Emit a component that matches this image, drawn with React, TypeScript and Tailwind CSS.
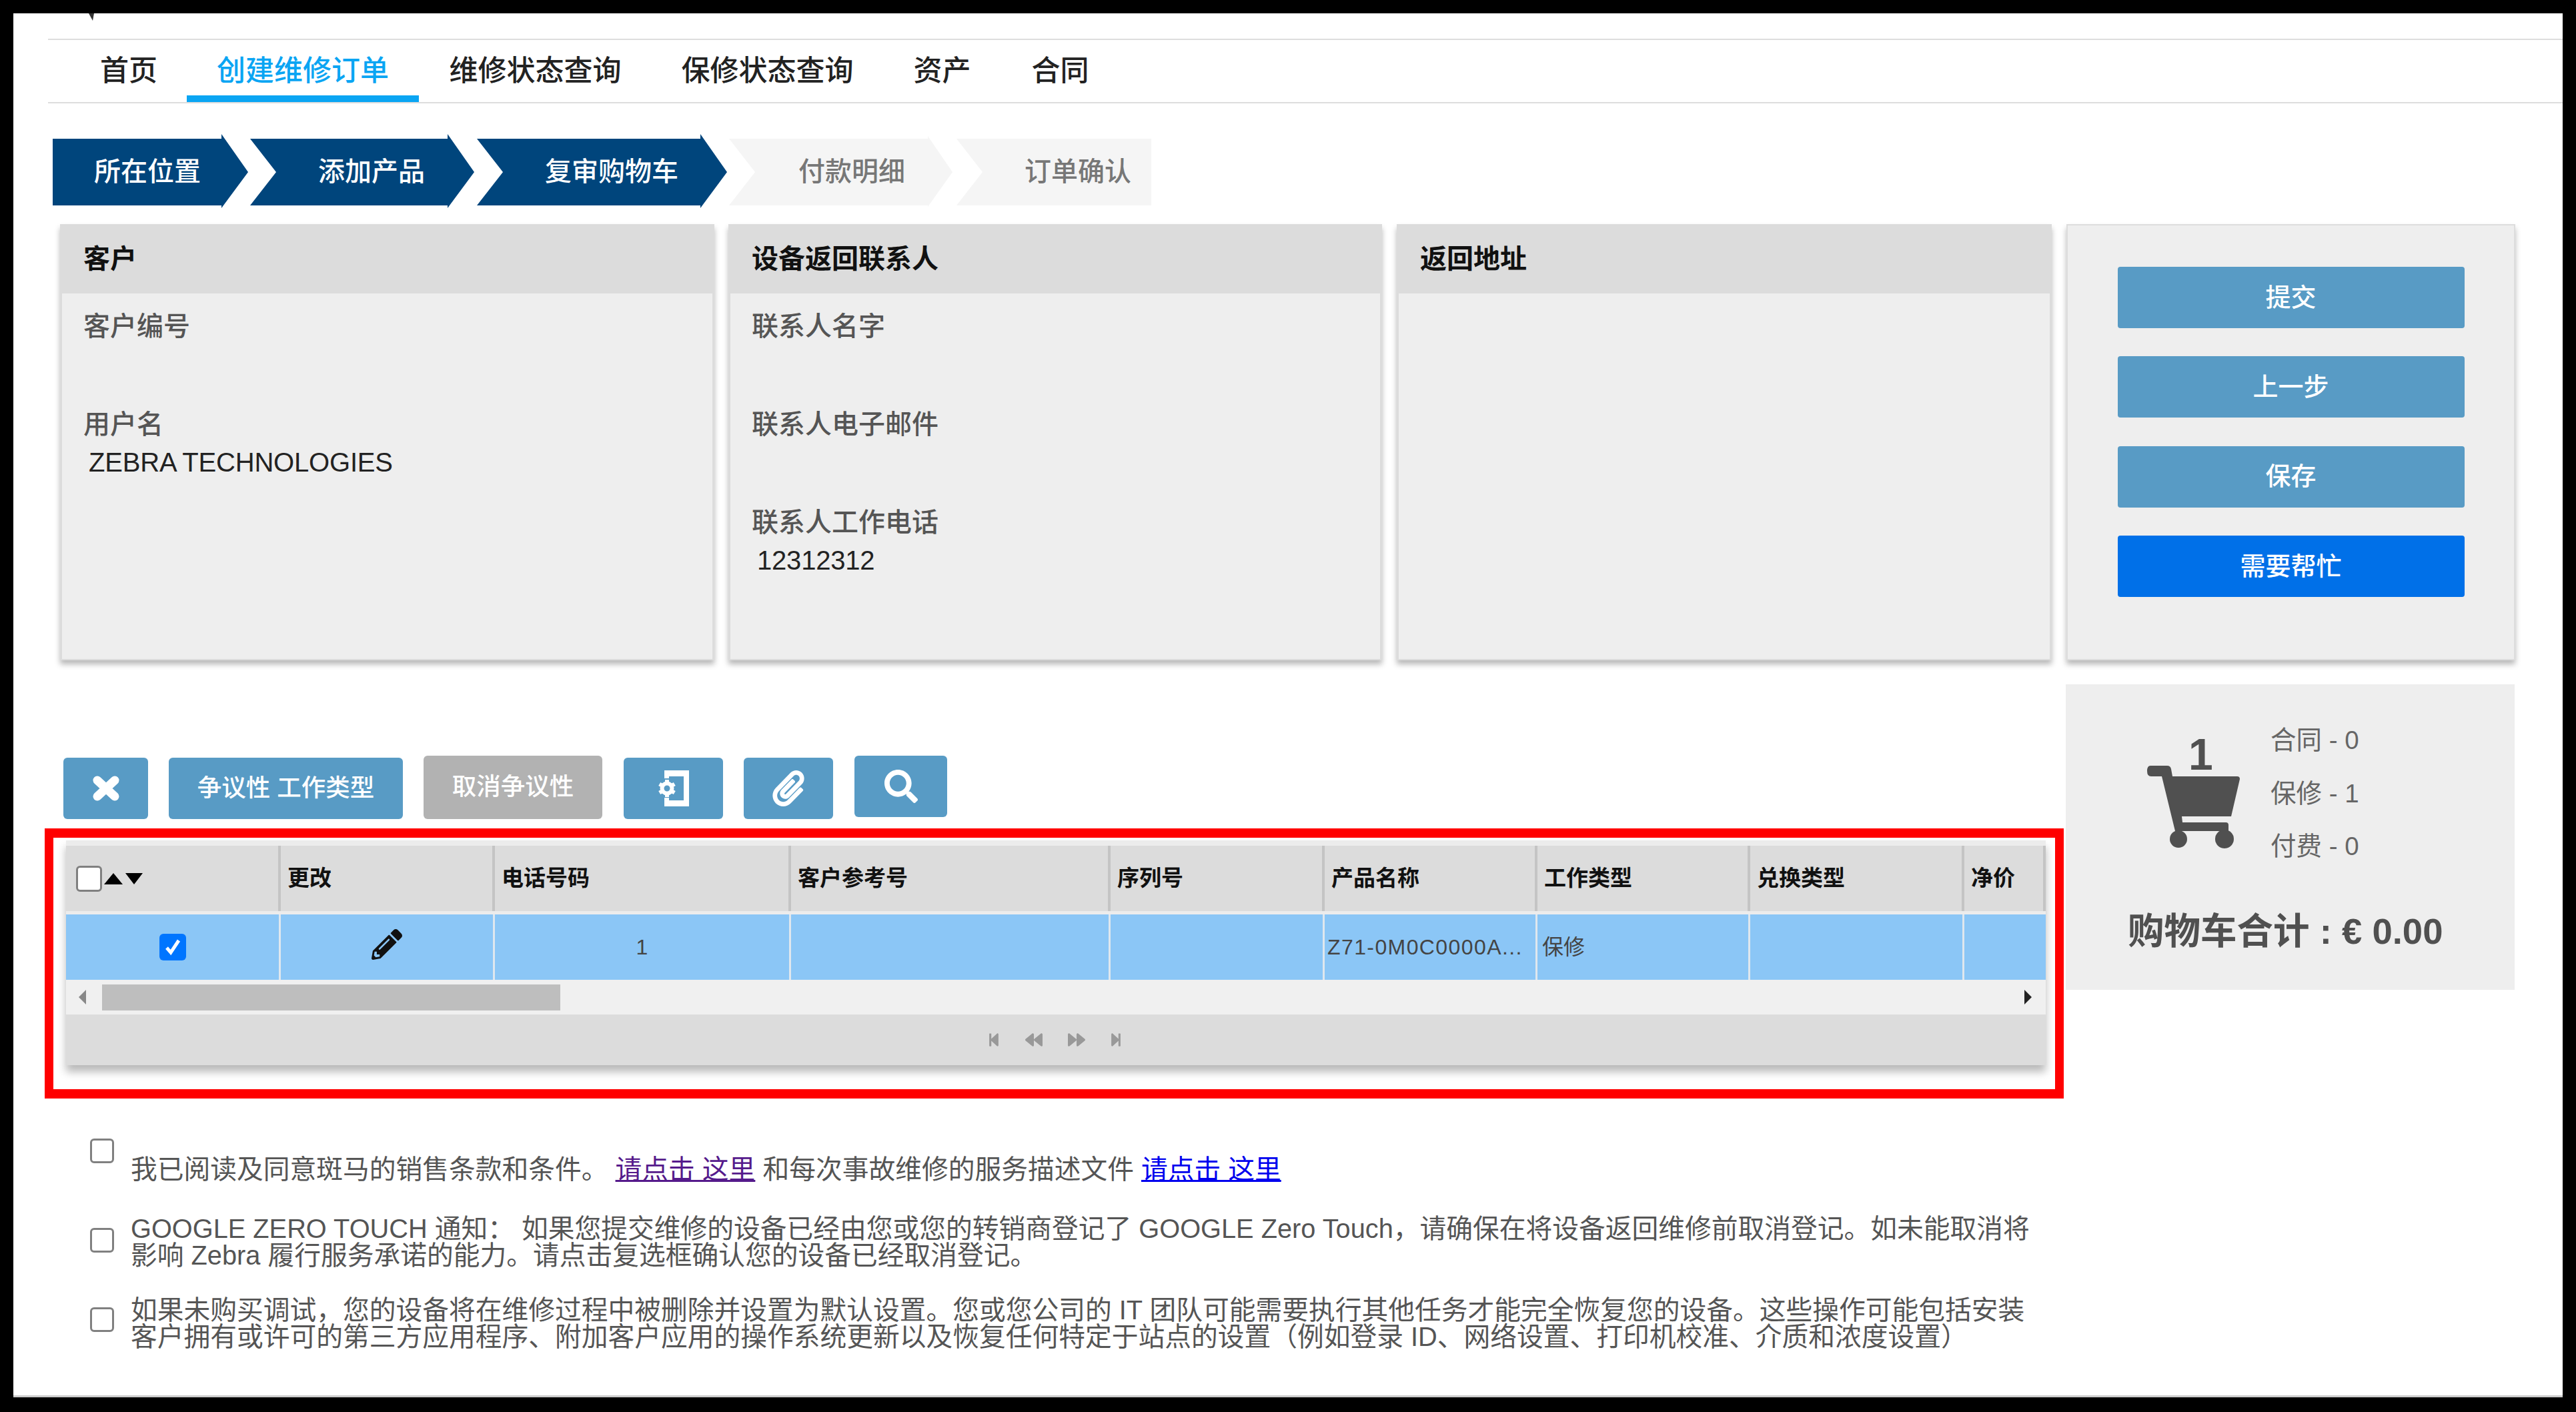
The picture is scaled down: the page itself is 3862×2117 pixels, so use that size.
import { FaBackward, FaForward, FaPaperclip, FaPencilAlt, FaSearch, FaStepBackward, FaStepForward } from "react-icons/fa";

const TABS = [
  { label: "首页", width: "w-[174px]" },
  { label: "创建维修订单", width: "w-[348px]", active: true },
  { label: "维修状态查询", width: "w-[349px]" },
  { label: "保修状态查询", width: "w-[347px]" },
  { label: "资产", width: "w-[177px]" },
  { label: "合同", width: "w-[177px]" },
];

const COLUMNS = ["", "更改", "电话号码", "客户参考号", "序列号", "产品名称", "工作类型", "兑换类型", "净价"];
const GRID = "grid grid-cols-[322px_321px_444px_479px_321px_319px_319px_321px_122px]";
const UNCHECKED = "appearance-none m-0 shrink-0 bg-white border-[3px] border-[#808080] rounded-[6px]";

function Field({ label, value }: { label: string; value?: string }) {
  return (
    <div className="h-[147px]">
      <div className="text-[40px] leading-[50px] font-medium text-[#555]">{label}</div>
      {value && <div className="mt-[7px] ml-[8px] text-[40px] leading-[50px] tracking-[-0.2px] text-[#222]">{value}</div>}
    </div>
  );
}

function InfoCard({ title, width, children }: { title: string; width: string; children?: React.ReactNode }) {
  return (
    <div className={`${width} h-[654px] flex flex-col bg-[#eee] border-x-[3px] border-b-[2px] border-[#dcdcdc] shadow-[0_6px_8px_rgba(0,0,0,0.28)]`}>
      <div className="h-[104px] shrink-0 -mx-[3px] px-[35px] flex items-center bg-[#dcdcdc] text-[40px] font-bold text-[#111]">{title}</div>
      <div className="pt-[24px] px-[32px]">{children}</div>
    </div>
  );
}

function SideButton({ label, primary }: { label: string; primary?: boolean }) {
  return (
    <div className={`w-[520px] h-[92px] rounded-[4px] flex items-center justify-center text-[38px] font-medium text-white ${primary ? "bg-[#0070e8]" : "bg-[#589bc5]"}`}>
      {label}
    </div>
  );
}

function CloseIcon() {
  return (
    <svg width="40" height="38" viewBox="0 0 40 38" stroke="#fff" strokeWidth="13" strokeLinecap="round">
      <path d="M7 7L33 31M33 7L7 31" />
    </svg>
  );
}

function PhoneGearIcon() {
  return (
    <svg width="46" height="54" viewBox="0 0 46 54" fill="#fff">
      <path d="M9 0H46V54H9V41H16V45H38V9H16V12H9Z" />
      <circle cx="13" cy="27" r="7.5" fill="none" stroke="#fff" strokeWidth="6" />
      {[0, 60, 120, 180, 240, 300].map((deg) => (
        <rect key={deg} x="10" y="14" width="6" height="6" transform={`rotate(${deg} 13 27)`} />
      ))}
    </svg>
  );
}

function CartIcon() {
  return (
    <svg width="139" height="124" viewBox="0 0 139 124" fill="#505050">
      <path d="M5 0H30Q35 0 36 5L38 16H135Q139 16 139 20L126 76H52L53 85H118Q122 85 122 89V98H42L22 16H6Q0 16 0 8Q0 0 5 0Z" />
      <circle cx="47" cy="110" r="13" />
      <circle cx="116" cy="110" r="14" />
    </svg>
  );
}

function ToolButton({ className, children }: { className: string; children: React.ReactNode }) {
  return <div className={`rounded-[6px] flex items-center justify-center text-white ${className}`}>{children}</div>;
}

export default function App() {
  return (
    <div className="w-[3862px] h-[2117px] bg-black pt-[20px] pl-[20px] pr-[20px] pb-[22px] font-['Liberation_Sans','Noto_Sans_CJK_SC',sans-serif]">
      <div className="relative h-full bg-white border-b-[3px] border-[#ccc] overflow-hidden">
        <div className="absolute left-[113px] top-0 w-0 h-0 border-l-[6px] border-r-[2px] border-t-[11px] border-l-transparent border-r-transparent border-t-[#333]" />

        {/* top nav */}
        <div className="mt-[38px] ml-[52px] h-[97px] border-y-2 border-[#ddd] flex pl-[34px]">
          {TABS.map((tab) => (
            <div
              key={tab.label}
              className={`${tab.width} h-[93px] flex items-center justify-center text-[43px] font-medium ${tab.active ? "text-[#0aa5f3] border-b-[10px] border-[#0aa5f3] pt-[10px]" : "text-[#222]"}`}
            >
              {tab.label}
            </div>
          ))}
        </div>

        {/* steps */}
        <div className="mt-[46px] ml-[59px] flex h-[111px] text-[40px] font-medium">
          <div className="w-[293px] pl-[62px] flex items-center bg-[#00457c] text-white [clip-path:polygon(0_7px,253px_7px,253px_0,293px_57px,253px_111px,253px_107px,0_107px)]">所在位置</div>
          <div className="ml-[3px] w-[336px] pl-[102px] flex items-center bg-[#00457c] text-white [clip-path:polygon(0_7px,296px_7px,296px_0,336px_57px,296px_111px,296px_107px,0_107px,39px_57px)]">添加产品</div>
          <div className="ml-[4px] w-[375px] pl-[102px] flex items-center bg-[#00457c] text-white [clip-path:polygon(0_7px,335px_7px,335px_0,375px_57px,335px_111px,335px_107px,0_107px,39px_57px)]">复审购物车</div>
          <div className="ml-[3px] w-[335px] pl-[104px] flex items-center bg-[#f5f5f5] text-[#777] [clip-path:polygon(0_7px,298px_7px,298px_3px,335px_57px,298px_109px,298px_107px,0_107px,39px_57px)]">付款明细</div>
          <div className="ml-[6px] w-[292px] pl-[102px] flex items-center bg-[#f5f5f5] text-[#777] [clip-path:polygon(0_7px,292px_7px,292px_107px,0_107px,39px_57px)]">订单确认</div>
        </div>

        {/* info cards */}
        <div className="mt-[24px] ml-[70px] flex">
          <InfoCard title="客户" width="w-[981px]">
            <Field label="客户编号" />
            <Field label="用户名" value="ZEBRA TECHNOLOGIES" />
          </InfoCard>
          <div className="ml-[21px]">
            <InfoCard title="设备返回联系人" width="w-[980px]">
              <Field label="联系人名字" />
              <Field label="联系人电子邮件" />
              <Field label="联系人工作电话" value="12312312" />
            </InfoCard>
          </div>
          <div className="ml-[22px]">
            <InfoCard title="返回地址" width="w-[982px]" />
          </div>
          <div className="ml-[22px] w-[673px] h-[654px] pt-[62px] flex flex-col items-center gap-[42.4px] bg-[#eee] border-2 border-[#ddd] shadow-[0_6px_8px_rgba(0,0,0,0.28)]">
            <SideButton label="提交" />
            <SideButton label="上一步" />
            <SideButton label="保存" />
            <SideButton label="需要帮忙" primary />
          </div>
        </div>

        <div className="flex">
          {/* left column */}
          <div className="w-[3077px] shrink-0 pt-[143px]">
            <div className="ml-[75px] h-[95px] flex items-start">
              <ToolButton className="mt-[3px] w-[127px] h-[92px] bg-[#589bc5]">
                <CloseIcon />
              </ToolButton>
              <ToolButton className="mt-[3px] ml-[31px] w-[351px] h-[92px] bg-[#589bc5] text-[36.5px] font-medium">争议性 工作类型</ToolButton>
              <ToolButton className="ml-[31px] w-[268px] h-[95px] bg-[#b2b2b2] text-[36.5px] font-medium">取消争议性</ToolButton>
              <ToolButton className="mt-[3px] ml-[32px] w-[149px] h-[92px] bg-[#589bc5]">
                <PhoneGearIcon />
              </ToolButton>
              <ToolButton className="mt-[3px] ml-[31px] w-[134px] h-[92px] bg-[#589bc5]">
                <FaPaperclip className="text-[54px]" />
              </ToolButton>
              <ToolButton className="ml-[32px] w-[139px] h-[92px] bg-[#589bc5]">
                <FaSearch className="text-[50px]" />
              </ToolButton>
            </div>

            {/* red box with grid */}
            <div className="mt-[14px] ml-[47px] w-[3027px] h-[405px] border-y-[14px] border-x-[13px] border-[#ff0000] pt-[4px] pl-[19px]">
              <div className="w-[2968px] h-[337px] bg-[#ececec] shadow-[0_10px_12px_rgba(0,0,0,0.28)]">
                <div className={`${GRID} pt-[8px] h-[111px]`}>
                  {COLUMNS.map((col, i) => (
                    <div key={i} className={`h-[98px] bg-[#dcdcdc] border-r-[4px] border-[#c4c4c4] flex items-center text-[33px] font-bold text-[#111] ${i === 0 ? "pl-[15px]" : "pl-[10px]"}`}>
                      {i === 0 ? (
                        <div className="flex items-center">
                          <input type="checkbox" readOnly className={`${UNCHECKED} w-[39px] h-[39px]`} />
                          <span className="ml-[3px] w-0 h-0 border-x-[14px] border-x-transparent border-b-[17px] border-b-black" />
                          <span className="ml-[4px] w-0 h-0 border-x-[13px] border-x-transparent border-t-[17px] border-t-black" />
                        </div>
                      ) : (
                        col
                      )}
                    </div>
                  ))}
                </div>
                <div className={`${GRID} h-[98px] bg-[#8bc6f6] text-[32px] text-[#444]`}>
                  <div className="border-r-[3px] border-[#dfe7ee] flex items-center justify-center">
                    <span className="w-[40px] h-[40px] rounded-[6px] bg-[#0075ff] flex items-center justify-center">
                      <svg width="26" height="26" viewBox="0 0 26 26" fill="none" stroke="#fff" strokeWidth="5">
                        <path d="M4 14L10 21L22 3" />
                      </svg>
                    </span>
                  </div>
                  <div className="border-r-[3px] border-[#dfe7ee] flex items-center justify-center pb-[8px]">
                    <FaPencilAlt className="text-[46px] text-[#111]" />
                  </div>
                  <div className="border-r-[3px] border-[#dfe7ee] flex items-center justify-center">1</div>
                  <div className="border-r-[3px] border-[#dfe7ee]" />
                  <div className="border-r-[3px] border-[#dfe7ee]" />
                  <div className="border-r-[3px] border-[#dfe7ee] flex items-center pl-[4px] overflow-hidden whitespace-nowrap tracking-[1.4px]">Z71-0M0C0000A...</div>
                  <div className="border-r-[3px] border-[#dfe7ee] flex items-center pl-[7px]">保修</div>
                  <div className="border-r-[3px] border-[#dfe7ee]" />
                  <div />
                </div>
                <div className="h-[52px] bg-[#f0f0f0] flex items-center pl-[19px]">
                  <span className="w-0 h-0 border-y-[11px] border-y-transparent border-r-[11px] border-r-[#888]" />
                  <div className="ml-[24px] w-[687px] h-[39px] bg-[#bebebe]" />
                  <span className="ml-auto mr-[21px] w-0 h-0 border-y-[11px] border-y-transparent border-l-[11px] border-l-[#222]" />
                </div>
                <div className="h-[76px] bg-[#dcdcdc] flex items-center pl-[1380px] text-[22px] text-[#999]">
                  <FaStepBackward />
                  <FaBackward className="ml-[36px] text-[26px]" />
                  <FaForward className="ml-[38px] text-[26px]" />
                  <FaStepForward className="ml-[35px]" />
                </div>
              </div>
            </div>

            {/* terms */}
            <div className="ml-[115px] text-[39.75px] leading-[40.5px] text-[#555] whitespace-nowrap">
              <div className="mt-[60px] flex items-start">
                <input type="checkbox" readOnly className={`${UNCHECKED} w-[36px] h-[37px]`} />
                <p className="mt-[26px] ml-[25px]">
                  我已阅读及同意斑马的销售条款和条件。 <a className="underline text-[#551a8b]">请点击 这里</a> 和每次事故维修的服务描述文件 <a className="underline text-[#0000ee]">请点击 这里</a>
                </p>
              </div>
              <div className="mt-[48px] flex items-start">
                <input type="checkbox" readOnly className={`${UNCHECKED} mt-[19px] w-[36px] h-[37px]`} />
                <p className="ml-[25px]">
                  GOOGLE ZERO TOUCH 通知： 如果您提交维修的设备已经由您或您的转销商登记了 GOOGLE Zero Touch，请确保在将设备返回维修前取消登记。如未能取消将
                  <br />
                  影响 Zebra 履行服务承诺的能力。请点击复选框确认您的设备已经取消登记。
                </p>
              </div>
              <div className="mt-[41px] flex items-start">
                <input type="checkbox" readOnly className={`${UNCHECKED} mt-[16px] w-[36px] h-[37px]`} />
                <p className="ml-[25px]">
                  如果未购买调试，您的设备将在维修过程中被删除并设置为默认设置。您或您公司的 IT 团队可能需要执行其他任务才能完全恢复您的设备。这些操作可能包括安装
                  <br />
                  客户拥有或许可的第三方应用程序、附加客户应用的操作系统更新以及恢复任何特定于站点的设置（例如登录 ID、网络设置、打印机校准、介质和浓度设置）
                </p>
              </div>
            </div>
          </div>

          {/* cart summary */}
          <div className="mt-[36px] w-[673px] h-[458px] bg-[#eee] flex flex-col">
            <div className="h-[286px] flex">
              <div className="ml-[122px] mt-[70px] relative">
                <div className="absolute left-[62px] top-[2px] text-[66px] leading-[66px] font-bold text-[#505050]">1</div>
                <div className="mt-[52px]">
                  <CartIcon />
                </div>
              </div>
              <div className="ml-[46px] mt-[44px] text-[38.5px] leading-[79.5px] text-[#666]">
                <div>合同 - 0</div>
                <div>保修 - 1</div>
                <div>付费 - 0</div>
              </div>
            </div>
            <div className="pl-[93px] text-[54.5px] leading-[60px] font-bold text-[#505050] mt-[55px]">购物车合计 : € 0.00</div>
          </div>
        </div>
      </div>
    </div>
  );
}
